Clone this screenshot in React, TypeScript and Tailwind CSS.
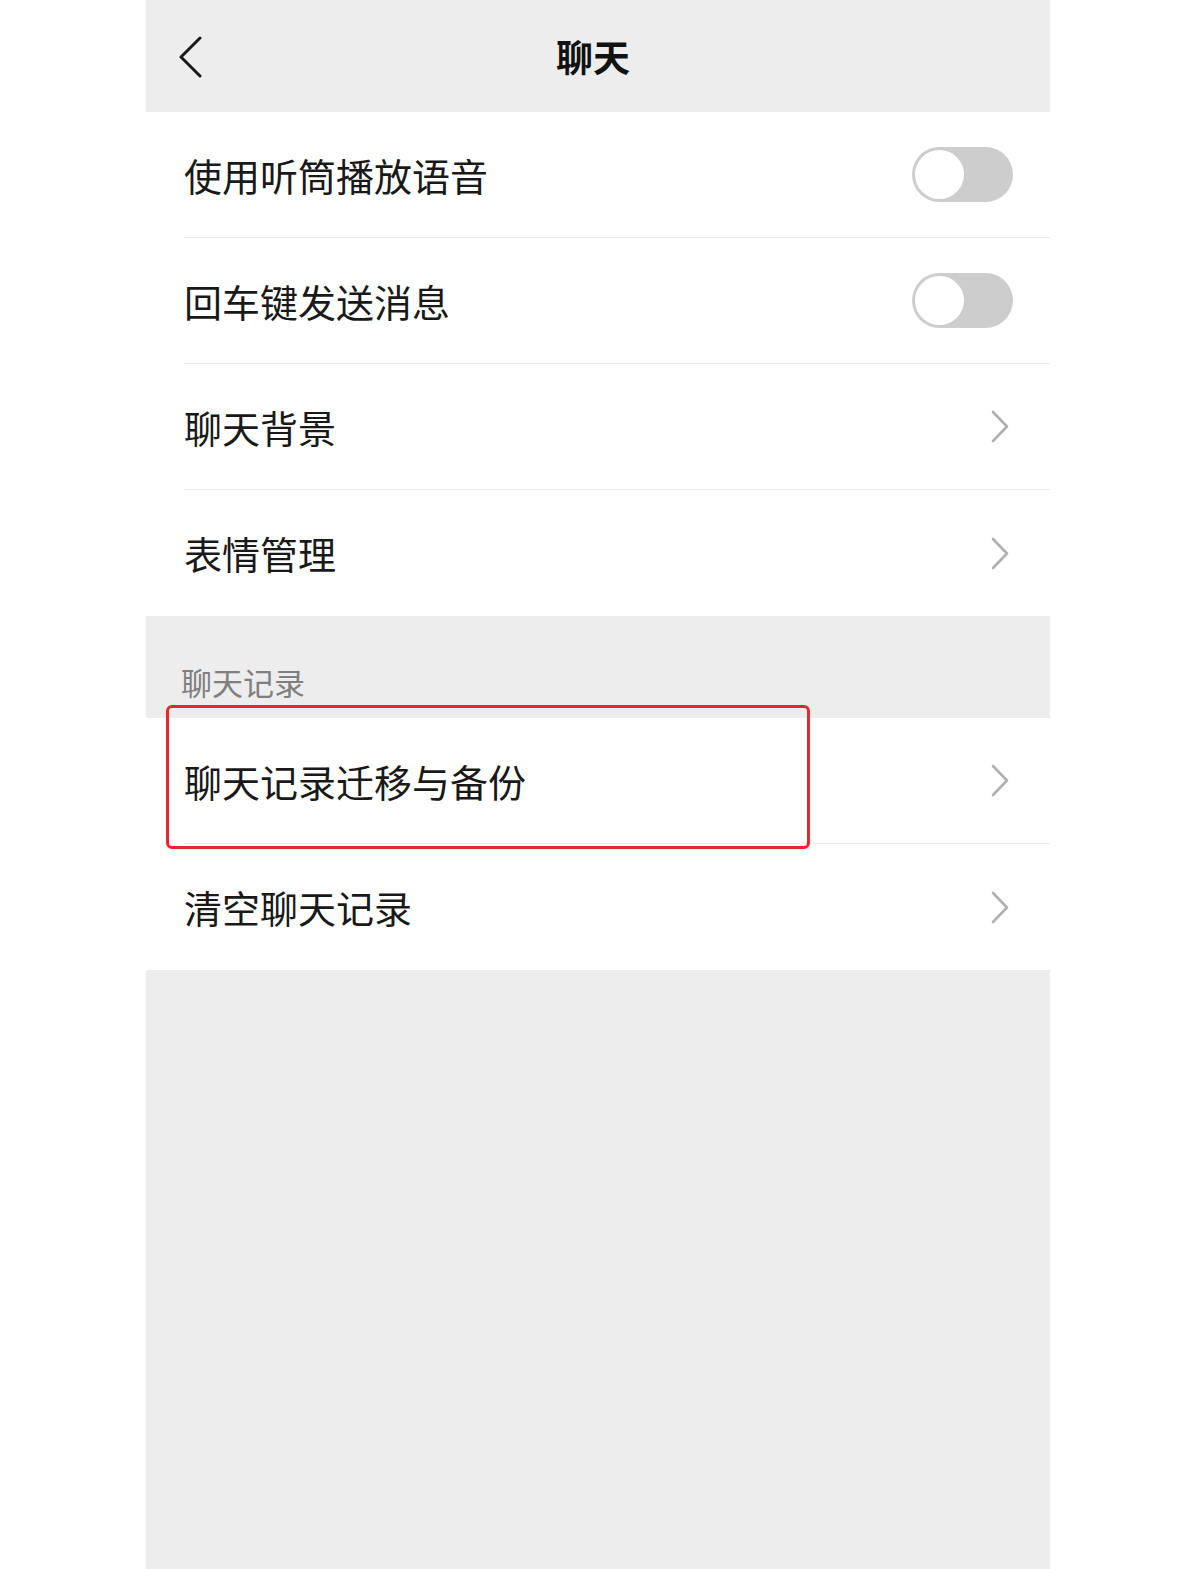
type Row = {
  label: string;
  kind: "toggle" | "link";
  highlight?: boolean;
};

const topRows: Row[] = [
  { label: "使用听筒播放语音", kind: "toggle" },
  { label: "回车键发送消息", kind: "toggle" },
  { label: "聊天背景", kind: "link" },
  { label: "表情管理", kind: "link" },
];

const historyRows: Row[] = [
  { label: "聊天记录迁移与备份", kind: "link", highlight: true },
  { label: "清空聊天记录", kind: "link" },
];

function Toggle() {
  return (
    <div className="w-[101px] h-[55px] rounded-full bg-[#cdcdcd] p-[3px] flex items-center">
      <div className="w-[49px] h-[49px] rounded-full bg-white" />
    </div>
  );
}

function Arrow() {
  return (
    <svg width="18" height="33" viewBox="0 0 18 33" className="mr-[4px]">
      <polyline
        points="2,2 16,16.5 2,31"
        fill="none"
        stroke="#b0b0b0"
        strokeWidth="2.6"
        strokeLinecap="round"
        strokeLinejoin="round"
      />
    </svg>
  );
}

function SettingRow({ row, last }: { row: Row; last: boolean }) {
  return (
    <div className="relative bg-white">
      {/* red annotation box */}
      {row.highlight && (
        <div className="absolute left-[20px] top-[-13px] w-[644px] h-[144px] border-[3px] border-[#e6282b] rounded-[6px] z-10" />
      )}
      <div
        className={`ml-[38px] h-[126px] pr-[37px] flex items-center justify-between ${
          last ? "" : "border-b border-[#ececec]"
        }`}
      >
        <span className="text-[38px] leading-none text-[#191919]">{row.label}</span>
        {row.kind === "toggle" ? <Toggle /> : <Arrow />}
      </div>
    </div>
  );
}

export default function App() {
  return (
    <div
      className="w-full min-h-[1569px] bg-white flex pl-[146px]"
      style={{ fontFamily: '"Noto Sans CJK SC", "Noto Sans", sans-serif' }}
    >
      <div className="w-[904px] h-[1569px] flex flex-col bg-[#ededed]">
        {/* Header */}
        <div className="h-[112px] grid grid-cols-[1fr_auto_1fr] items-center bg-[#ededed]">
          <div className="pl-[32px] pt-[2px]">
            <svg width="26" height="42" viewBox="0 0 26 42">
              <polyline
                points="22,2 3,21 22,40"
                fill="none"
                stroke="#1a1a1a"
                strokeWidth="3"
                strokeLinecap="round"
                strokeLinejoin="round"
              />
            </svg>
          </div>
          <h1 className="mr-[10px] text-[37px] font-semibold text-[#111] leading-none">聊天</h1>
          <div />
        </div>

        {topRows.map((row, i) => (
          <SettingRow key={row.label} row={row} last={i === topRows.length - 1} />
        ))}

        {/* Section label */}
        <div className="h-[102px] flex items-end pl-[35px] pb-[21px]">
          <span className="text-[31px] leading-none text-[#7f7f7f]">聊天记录</span>
        </div>

        {historyRows.map((row, i) => (
          <SettingRow key={row.label} row={row} last={i === historyRows.length - 1} />
        ))}

        <div className="flex-1 bg-[#ededed]" />
      </div>
    </div>
  );
}
